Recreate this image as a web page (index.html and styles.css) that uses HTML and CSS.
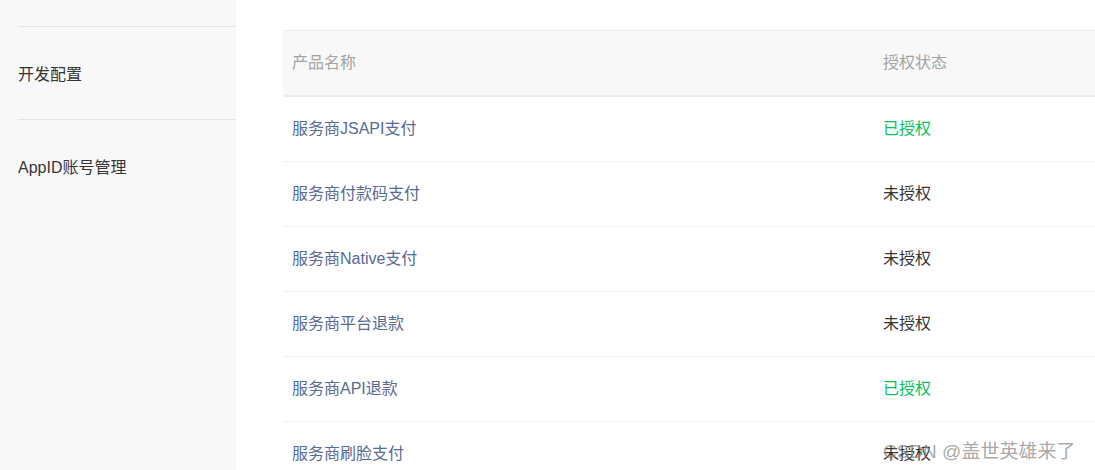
FILE: index.html
```html
<!DOCTYPE html>
<html>

<head>
    <meta name="viewport" content="width=device-width, initial-scale=1">
    <link rel="stylesheet" href="styles.css">
</head>

<body>
    <div class="page">
        <div class="sidebar">
            <div class="menu-item">开发配置</div>
            <div class="menu-item">AppID账号管理</div>
        </div>

        <div class="main">
            <table class="products">
                <thead>
                    <tr>
                        <th class="col-name">产品名称</th>
                        <th>授权状态</th>
                    </tr>
                </thead>
                <tbody>
                    <tr>
                        <td><a href="#">服务商JSAPI支付</a></td>
                        <td class="on">已授权</td>
                    </tr>
                    <tr>
                        <td><a href="#">服务商付款码支付</a></td>
                        <td>未授权</td>
                    </tr>
                    <tr>
                        <td><a href="#">服务商Native支付</a></td>
                        <td>未授权</td>
                    </tr>
                    <tr>
                        <td><a href="#">服务商平台退款</a></td>
                        <td>未授权</td>
                    </tr>
                    <tr>
                        <td><a href="#">服务商API退款</a></td>
                        <td class="on">已授权</td>
                    </tr>
                    <tr>
                        <td><a href="#">服务商刷脸支付</a></td>
                        <td>未授权</td>
                    </tr>
                </tbody>
            </table>
        </div>
    </div>

    <div class="watermark">CSDN @盖世英雄来了</div>
</body>

</html>
```

FILE: styles.css
```css
html,
body {
    margin: 0;
    height: 100%;
    overflow: hidden;
}

body {
    font-family: "Liberation Sans", "Noto Sans CJK SC", sans-serif;
    font-size: 16px;
    color: #353535;
    background: #fff;
}

.page {
    display: flex;
    height: 470px;
}

.sidebar {
    width: 218px;
    flex: none;
    padding: 26px 0 0 18px;
    background-color: #f8f8f8;
}

.menu-item {
    height: 92px;
    display: flex;
    align-items: center;
    border-top: 1px solid #e4e4e4;
}

.main {
    flex: 1;
    padding: 30px 0 0 47px;
    overflow: hidden;
}

.products {
    width: 900px;
    border-collapse: collapse;
}

.products th,
.products td {
    text-align: left;
    padding: 0 9px;
    line-height: 20px;
}

.products th {
    height: 64px;
    font-weight: normal;
    color: #a3a3a3;
    background-color: #f8f8f8;
    border-top: 1px solid #ededed;
    border-bottom: 2px solid #ececec;
}

.products .col-name {
    width: 591px;
    box-sizing: border-box;
}

.products td {
    height: 64px;
    border-bottom: 1px solid #f1f1f1;
}

.products a {
    color: #576b95;
    text-decoration: none;
}

.products td.on {
    color: #07c160;
}

.watermark {
    position: absolute;
    left: 883px;
    top: 440px;
    font-size: 19px;
    line-height: 24px;
    color: rgba(130, 130, 130, 0.7);
    white-space: nowrap;
}
```
